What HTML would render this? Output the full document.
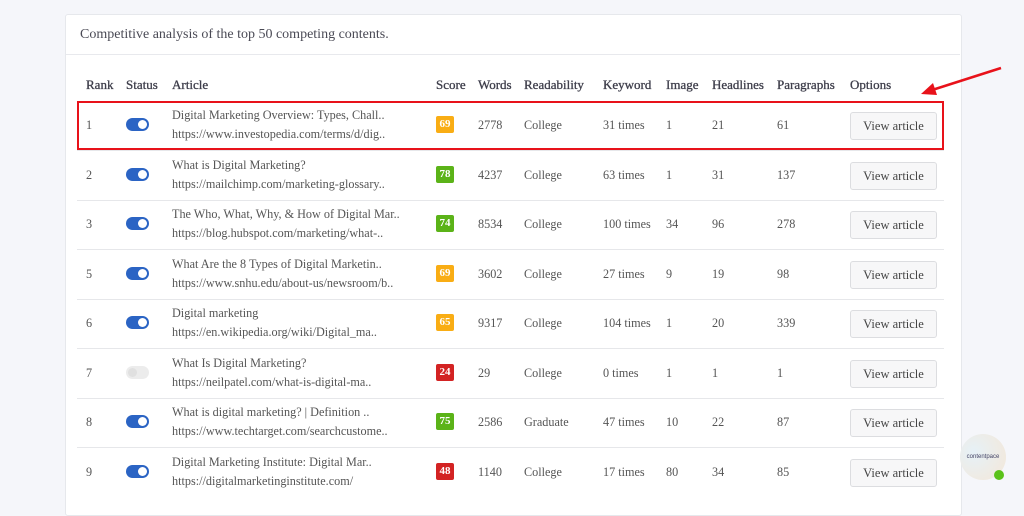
<!DOCTYPE html><html><head><style>
body{margin:0;width:1024px;height:495px;overflow:hidden;background:#f5f6fa;font-family:"Liberation Serif",serif;color:#444;position:relative}
.card{position:absolute;left:65px;top:14px;width:895px;height:500px;background:#fff;border:1px solid #e6e8ec;border-radius:3px}
.hd{position:absolute;left:80px;top:27px;font-size:14px;color:#4a4a55}
.hl{position:absolute;left:66px;top:54px;width:894px;height:1px;background:#e8e9ed}
.th{position:absolute;top:77px;font-size:13px;color:#3d3d4a;-webkit-text-stroke:0.3px #3d3d4a}
.row{position:absolute;left:77px;width:867px;height:49px;border-bottom:1px solid #e6e7ea;font-size:12.2px;color:#555}
.row>*{position:absolute}
.c{top:17px}
.t1{left:95px;top:7px;color:#555}
.t2{left:95px;top:26px;color:#555}
.tg{left:49px;top:17px;width:23px;height:13px;border-radius:7px;background:#2b64c4}
.tg::after{content:"";position:absolute;right:2px;top:2px;width:9px;height:9px;border-radius:50%;background:#fff}
.tg.off{background:#ececec}.tg.off::after{left:2px;background:#e0e0e0}
.sc{left:359px;top:15px;width:18px;height:17px;border-radius:2px;color:#fff;font-size:11px;font-weight:bold;text-align:center;line-height:17px}
.o{background:#f9ad14}.g{background:#5bb318}.r{background:#d32323}
.btn{left:773px;top:11px;width:85px;height:26px;border:1px solid #dcdde0;border-radius:3px;background:#f7f7f8;text-align:center;line-height:26px;color:#444;font-size:12.5px}
.red{position:absolute;left:77px;top:101px;width:863px;height:45px;border:2px solid #e8121a}
</style></head><body>
<div class="card"></div>
<div class="hd">Competitive analysis of the top 50 competing contents.</div>
<div class="hl"></div>
<div class="th" style="left:86px">Rank</div><div class="th" style="left:126px">Status</div><div class="th" style="left:172px">Article</div><div class="th" style="left:436px">Score</div><div class="th" style="left:478px">Words</div><div class="th" style="left:524px">Readability</div><div class="th" style="left:603px">Keyword</div><div class="th" style="left:666px">Image</div><div class="th" style="left:712px">Headlines</div><div class="th" style="left:777px">Paragraphs</div><div class="th" style="left:850px">Options</div>

<div class="row" style="top:101px"><span class="c" style="left:9px">1</span><span class="tg"></span><span class="t1">Digital Marketing Overview: Types, Chall..</span><span class="t2">https://www.investopedia.com/terms/d/dig..</span><span class="sc o">69</span><span class="c" style="left:401px">2778</span><span class="c" style="left:447px">College</span><span class="c" style="left:526px">31 times</span><span class="c" style="left:589px">1</span><span class="c" style="left:635px">21</span><span class="c" style="left:700px">61</span><span class="btn">View article</span></div>
<div class="row" style="top:150.5px"><span class="c" style="left:9px">2</span><span class="tg"></span><span class="t1">What is Digital Marketing?</span><span class="t2">https://mailchimp.com/marketing-glossary..</span><span class="sc g">78</span><span class="c" style="left:401px">4237</span><span class="c" style="left:447px">College</span><span class="c" style="left:526px">63 times</span><span class="c" style="left:589px">1</span><span class="c" style="left:635px">31</span><span class="c" style="left:700px">137</span><span class="btn">View article</span></div>
<div class="row" style="top:200px"><span class="c" style="left:9px">3</span><span class="tg"></span><span class="t1">The Who, What, Why, &amp; How of Digital Mar..</span><span class="t2">https://blog.hubspot.com/marketing/what-..</span><span class="sc g">74</span><span class="c" style="left:401px">8534</span><span class="c" style="left:447px">College</span><span class="c" style="left:526px">100 times</span><span class="c" style="left:589px">34</span><span class="c" style="left:635px">96</span><span class="c" style="left:700px">278</span><span class="btn">View article</span></div>
<div class="row" style="top:249.5px"><span class="c" style="left:9px">5</span><span class="tg"></span><span class="t1">What Are the 8 Types of Digital Marketin..</span><span class="t2">https://www.snhu.edu/about-us/newsroom/b..</span><span class="sc o">69</span><span class="c" style="left:401px">3602</span><span class="c" style="left:447px">College</span><span class="c" style="left:526px">27 times</span><span class="c" style="left:589px">9</span><span class="c" style="left:635px">19</span><span class="c" style="left:700px">98</span><span class="btn">View article</span></div>
<div class="row" style="top:299px"><span class="c" style="left:9px">6</span><span class="tg"></span><span class="t1">Digital marketing</span><span class="t2">https://en.wikipedia.org/wiki/Digital_ma..</span><span class="sc o">65</span><span class="c" style="left:401px">9317</span><span class="c" style="left:447px">College</span><span class="c" style="left:526px">104 times</span><span class="c" style="left:589px">1</span><span class="c" style="left:635px">20</span><span class="c" style="left:700px">339</span><span class="btn">View article</span></div>
<div class="row" style="top:348.5px"><span class="c" style="left:9px">7</span><span class="tg off"></span><span class="t1">What Is Digital Marketing?</span><span class="t2">https://neilpatel.com/what-is-digital-ma..</span><span class="sc r">24</span><span class="c" style="left:401px">29</span><span class="c" style="left:447px">College</span><span class="c" style="left:526px">0 times</span><span class="c" style="left:589px">1</span><span class="c" style="left:635px">1</span><span class="c" style="left:700px">1</span><span class="btn">View article</span></div>
<div class="row" style="top:398px"><span class="c" style="left:9px">8</span><span class="tg"></span><span class="t1">What is digital marketing? | Definition ..</span><span class="t2">https://www.techtarget.com/searchcustome..</span><span class="sc g">75</span><span class="c" style="left:401px">2586</span><span class="c" style="left:447px">Graduate</span><span class="c" style="left:526px">47 times</span><span class="c" style="left:589px">10</span><span class="c" style="left:635px">22</span><span class="c" style="left:700px">87</span><span class="btn">View article</span></div>
<div class="row" style="top:447.5px;border:none"><span class="c" style="left:9px">9</span><span class="tg"></span><span class="t1">Digital Marketing Institute: Digital Mar..</span><span class="t2">https://digitalmarketinginstitute.com/</span><span class="sc r">48</span><span class="c" style="left:401px">1140</span><span class="c" style="left:447px">College</span><span class="c" style="left:526px">17 times</span><span class="c" style="left:589px">80</span><span class="c" style="left:635px">34</span><span class="c" style="left:700px">85</span><span class="btn">View article</span></div>

<div class="red"></div>
<svg style="position:absolute;left:915px;top:62px" width="95" height="40"><line x1="86" y1="6" x2="14" y2="29" stroke="#e8121a" stroke-width="2.5"/><polygon points="6,32 18,21 22,33" fill="#e8121a"/></svg>
<div style="position:absolute;left:960px;top:434px;width:46px;height:46px;border-radius:50%;background:radial-gradient(circle at 30% 40%,#e6f1f7,#f4e7d8);font-size:6px;color:#446;text-align:center;line-height:46px;font-family:'Liberation Sans',sans-serif">contentpace</div>
<div style="position:absolute;left:994px;top:470px;width:10px;height:10px;border-radius:50%;background:#5bc21a"></div>
</body></html>
